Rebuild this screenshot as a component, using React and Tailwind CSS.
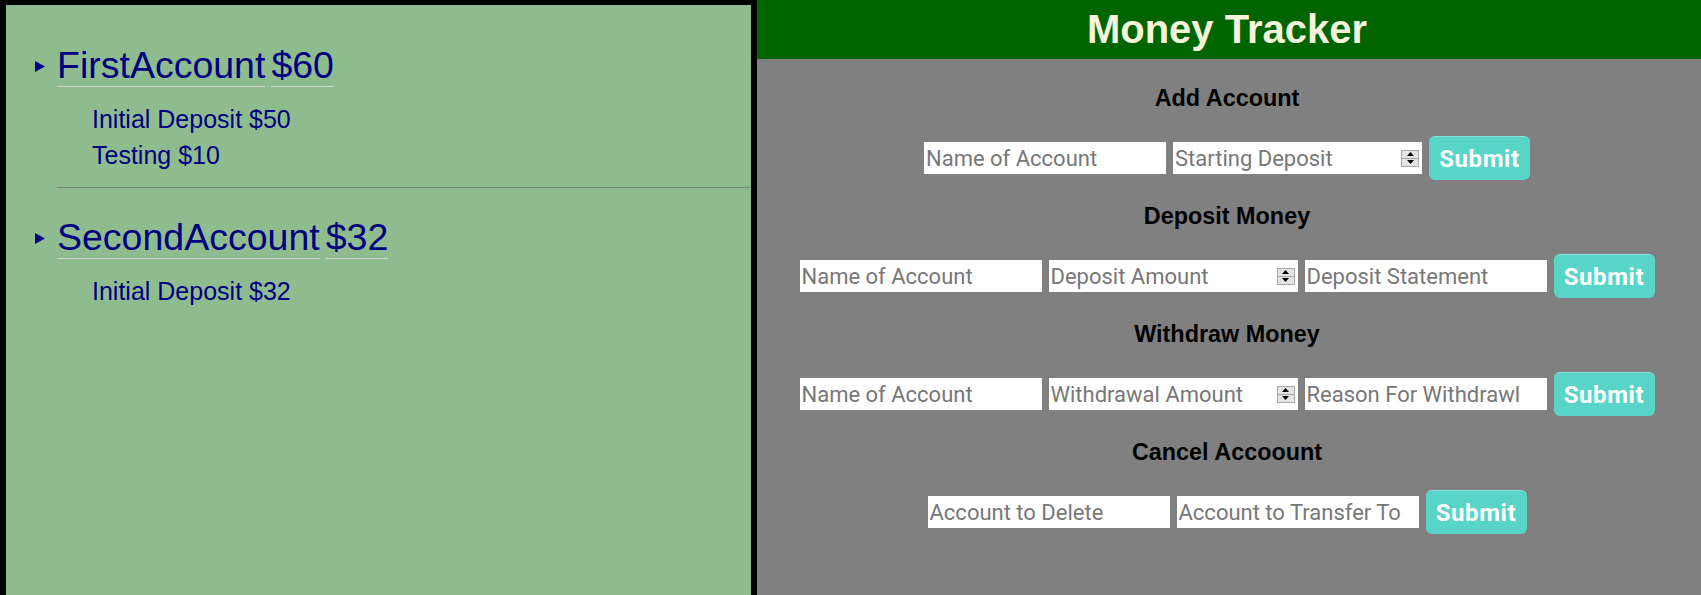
import React from "react";

const accounts = [
  {
    name: "FirstAccount",
    balance: 60,
    entries: [
      { label: "Initial Deposit", amount: 50 },
      { label: "Testing", amount: 10 },
    ],
  },
  {
    name: "SecondAccount",
    balance: 32,
    entries: [{ label: "Initial Deposit", amount: 32 }],
  },
];

// Old-style spin buttons drawn inside the number field
const Spinner = () => (
  <div className="flex flex-col w-[18px] h-[17px] mr-[3px] border border-[#a8a8a8] bg-[#e4e4e4] shrink-0">
    <div className="flex-1 flex items-center justify-center border-b border-[#a8a8a8]">
      <svg width="7" height="4" viewBox="0 0 7 4">
        <path d="M0 4 L3.5 0 L7 4 Z" fill="#000" />
      </svg>
    </div>
    <div className="flex-1 flex items-center justify-center">
      <svg width="7" height="4" viewBox="0 0 7 4">
        <path d="M0 0 L3.5 4 L7 0 Z" fill="#000" />
      </svg>
    </div>
  </div>
);

const TextField = ({ placeholder }) => (
  <input
    type="text"
    placeholder={placeholder}
    className="w-[242px] h-[32px] bg-white border-0 outline-none pl-[2px] text-[22px] text-black placeholder:text-[#777777] font-['Roboto',sans-serif]"
  />
);

const NumberField = ({ placeholder }) => (
  <div className="w-[249px] h-[32px] bg-white flex items-center">
    <input
      type="text"
      placeholder={placeholder}
      className="flex-1 min-w-0 h-full bg-transparent border-0 outline-none pl-[2px] text-[22px] text-black placeholder:text-[#777777] font-['Roboto',sans-serif]"
    />
    <Spinner />
  </div>
);

const SubmitButton = () => (
  <button className="w-[101px] h-[44px] rounded-[6px] bg-[#58d5c8] border-t border-t-[#86e2d8] text-white text-[24px] font-bold tracking-[0.6px] font-['Roboto',sans-serif]">
    Submit
  </button>
);

const Section = ({ title, first, children }) => (
  <div className={first ? "mt-[26px]" : "mt-[23px]"}>
    <h3 className="text-[23.4px] leading-[27px] font-bold text-black text-center">
      {title}
    </h3>
    <div className="mt-[24px] h-[44px] flex items-center justify-center gap-[7px]">
      {children}
    </div>
  </div>
);

export default function App() {
  return (
    <div className="flex h-screen overflow-hidden font-['Liberation_Sans',Arial,sans-serif]">
      {/* Accounts list */}
      <div className="w-[757px] shrink-0 bg-[#8fbc8f] border-t-[5px] border-l-[6px] border-r-[6px] border-black pt-[39px] pl-[51px]">
        {accounts.map((acc, i) => (
          <div key={acc.name}>
            {i > 0 && <div className="h-px bg-[#808080] mt-[14px] mb-[28px]" />}
            <div className="text-[37.5px] leading-[43px] text-[#000080] whitespace-nowrap">
              <svg
                width="10"
                height="11"
                viewBox="0 0 10 11"
                className="inline-block -ml-[22px] mr-[12px] mb-[4px]"
              >
                <path d="M0 0 L10 5.5 L0 11 Z" fill="#000080" />
              </svg>
              <span className="border-b border-[#d3d3d3]">{acc.name}</span>
              <span className="ml-[6px] border-b border-[#d3d3d3]">${acc.balance}</span>
            </div>
            <div className="mt-[14px] ml-[35px] text-[25px] leading-[36px] text-[#000080]">
              {acc.entries.map((e, j) => (
                <div key={j}>
                  {e.label} ${e.amount}
                </div>
              ))}
            </div>
          </div>
        ))}
      </div>

      {/* Forms */}
      <div className="flex-1 bg-[#808080]">
        <div className="h-[59px] bg-[#006400] pr-[4px] text-center text-[40px] leading-[59px] font-bold text-[#f5f5dc]">
          Money Tracker
        </div>

        <div className="pr-[4px]">
          <Section title="Add Account" first>
            <TextField placeholder="Name of Account" />
            <NumberField placeholder="Starting Deposit" />
            <SubmitButton />
          </Section>

          <Section title="Deposit Money">
            <TextField placeholder="Name of Account" />
            <NumberField placeholder="Deposit Amount" />
            <TextField placeholder="Deposit Statement" />
            <SubmitButton />
          </Section>

          <Section title="Withdraw Money">
            <TextField placeholder="Name of Account" />
            <NumberField placeholder="Withdrawal Amount" />
            <TextField placeholder="Reason For Withdrawl" />
            <SubmitButton />
          </Section>

          <Section title="Cancel Accoount">
            <TextField placeholder="Account to Delete" />
            <TextField placeholder="Account to Transfer To" />
            <SubmitButton />
          </Section>
        </div>
      </div>
    </div>
  );
}
